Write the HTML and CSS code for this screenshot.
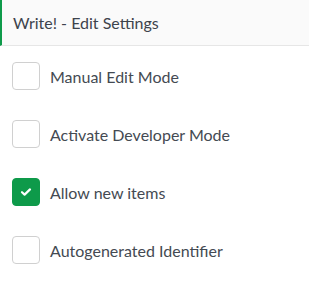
FILE: index.html
```html
<!DOCTYPE html>
<html lang="en">
<head>
    <meta charset="UTF-8">
    <title>Write! - Edit Settings</title>
    <link rel="stylesheet" href="styles.css">
</head>
<body>
    <div class="panel">
        <div class="panel-header">Write! - Edit Settings</div>
        <div class="panel-body">
            <label class="option">
                <span class="box"></span>
                <span class="option-text">Manual Edit Mode</span>
            </label>
            <label class="option">
                <span class="box"></span>
                <span class="option-text">Activate Developer Mode</span>
            </label>
            <label class="option">
                <span class="box checked">
                    <svg width="12" height="10" viewBox="0 0 12 10"><path d="M2 5.2 L4.6 7.6 L10 2.4" fill="none" stroke="#fff" stroke-width="2.2" stroke-linecap="round" stroke-linejoin="round"/></svg>
                </span>
                <span class="option-text">Allow new items</span>
            </label>
            <label class="option">
                <span class="box"></span>
                <span class="option-text">Autogenerated Identifier</span>
            </label>
        </div>
    </div>
</body>
</html>
```

FILE: styles.css
```css
body {
    margin: 0;
    padding: 0;
    background: #fff;
    font-family: "Source Sans Pro", "Lato", "Noto Sans", sans-serif;
    color: #444a52;
}
.panel-header {
    height: 45px;
    line-height: 45px;
    padding-left: 11px;
    background: #fafafa;
    border-left: 2px solid #0e9a4a;
    border-bottom: 1px solid #e6e6e6;
    font-size: 16px;
    color: #3d434c;
}
.panel-body {
    padding: 16px 12px 0 12px;
    display: flex;
    flex-direction: column;
    gap: 30px;
}
.option {
    display: flex;
    align-items: center;
    gap: 10px;
    height: 28px;
    font-size: 16px;
}
.box {
    width: 26px;
    height: 26px;
    border: 1px solid #d0d0d0;
    border-radius: 4px;
    background: #fff;
    display: flex;
    align-items: center;
    justify-content: center;
    flex-shrink: 0;
}
.box.checked {
    background: #0e9a4a;
    border-color: #0e9a4a;
}
```
